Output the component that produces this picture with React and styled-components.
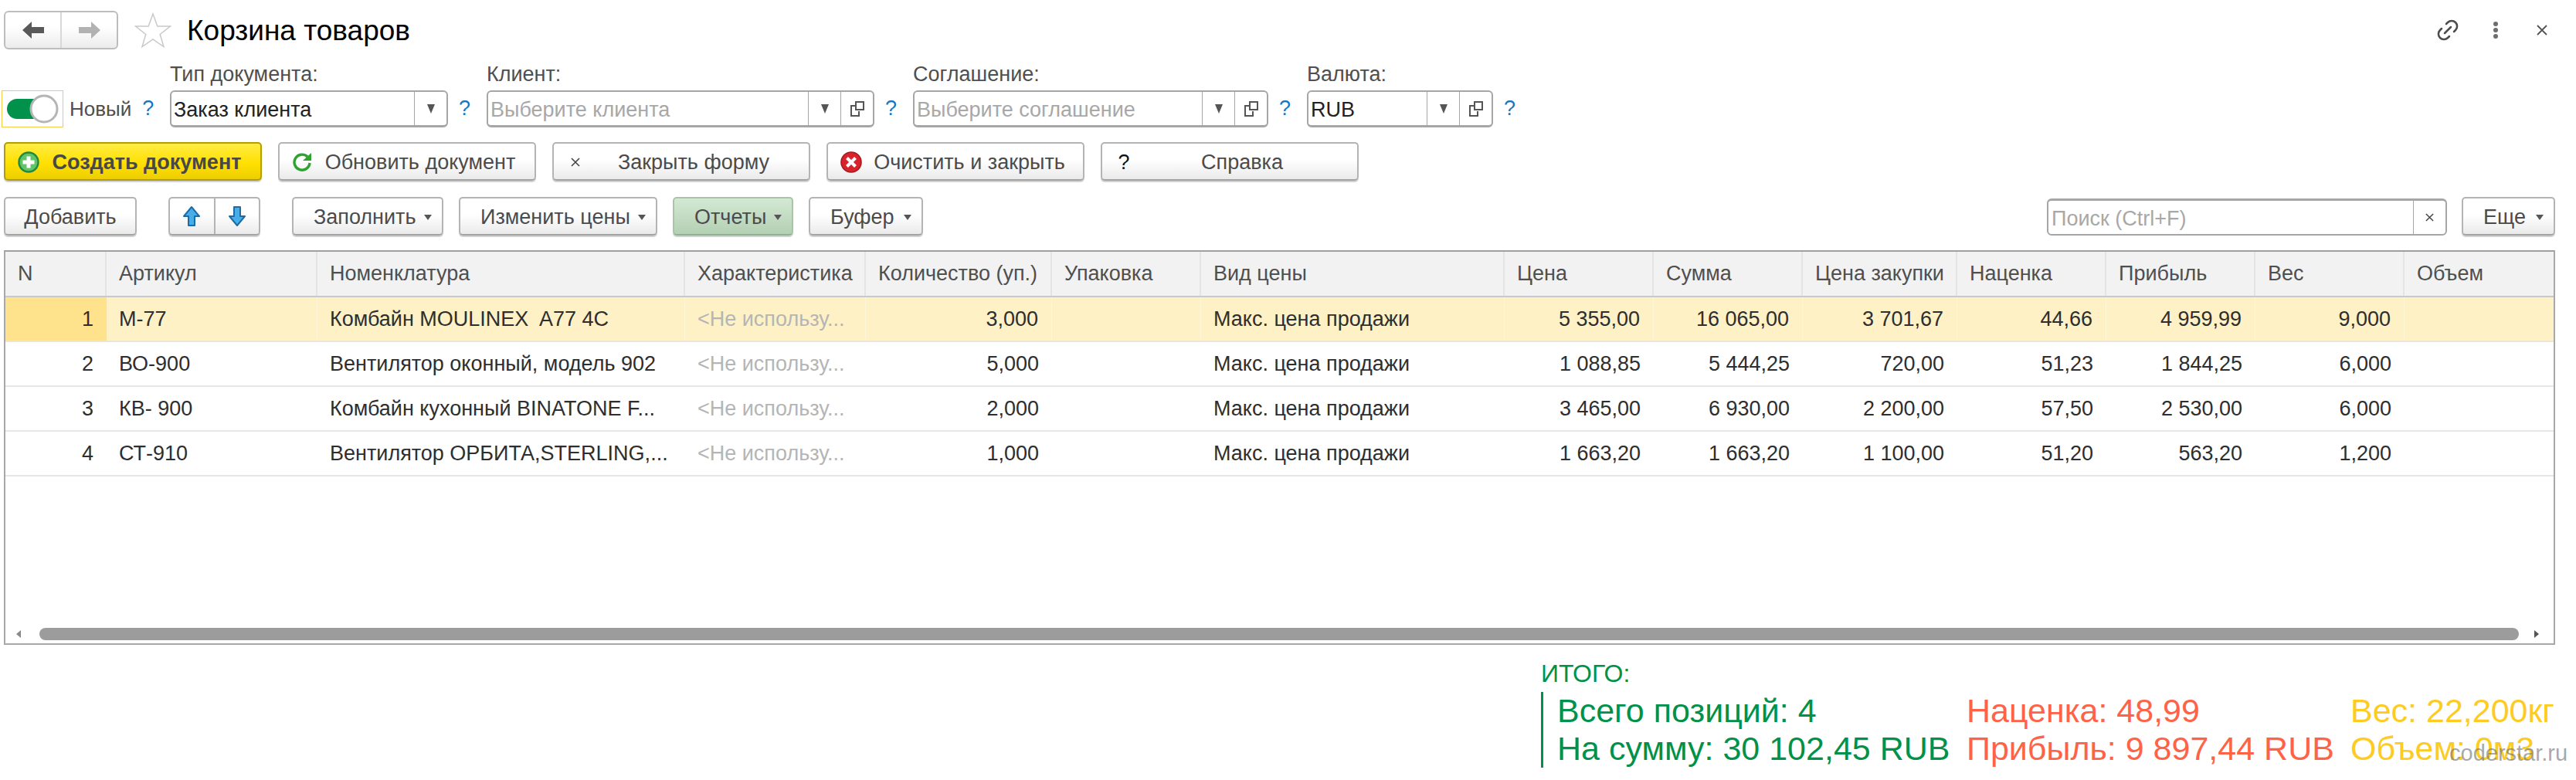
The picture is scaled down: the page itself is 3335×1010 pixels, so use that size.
import React from "react";
import styled, { createGlobalStyle } from "styled-components";

const GlobalStyle = createGlobalStyle`
  html, body {
    margin: 0;
    padding: 0;
    background: #fff;
    overflow: hidden;
  }
  * { box-sizing: border-box; }
`;

const Page = styled.div`
  position: relative;
  width: 3335px;
  height: 1010px;
  padding: 14px 0 0 5px;
  font-family: "Liberation Sans", Arial, sans-serif;
  font-size: 27px;
  color: #4b4b4b;
  background: #fff;
`;

const TitleRow = styled.div`
  display: flex;
  align-items: center;
  height: 50px;
`;

const NavGroup = styled.div`
  display: flex;
  width: 148px;
  height: 50px;
  border: 2px solid #bdbdbd;
  border-radius: 6px;
  background: linear-gradient(#fff 40%, #ececec);
`;

const NavCell = styled.div`
  flex: 1;
  display: flex;
  align-items: center;
  justify-content: center;
  & + & { border-left: 2px solid #d8d8d8; }
`;

const StarIcon = styled.svg`
  margin-left: 21px;
  width: 48px;
  height: 46px;
`;

const Title = styled.h1`
  margin: 0 0 0 20px;
  padding-top: 2px;
  font-size: 37px;
  font-weight: 400;
  color: #000;
  white-space: nowrap;
`;

const WindowTools = styled.div`
  display: flex;
  align-items: center;
  margin-left: auto;
  margin-right: 37px;
`;

const DotsIcon = styled.svg`
  margin-left: 41px;
`;

const CloseIcon = styled.svg`
  margin-left: 49px;
`;

const FieldsRow = styled.div`
  display: flex;
  align-items: flex-end;
  margin-top: 18px;
`;

const ToggleBlock = styled.div`
  display: flex;
  align-items: center;
  width: 218px;
  height: 48px;
  margin-left: -3px;
`;

const ToggleFrame = styled.div`
  display: flex;
  align-items: center;
  justify-content: center;
  width: 80px;
  height: 48px;
  border: 1px solid #f6cb45;
`;

const ToggleText = styled.span`
  margin-left: 8px;
  font-size: 26px;
  color: #4f4f4f;
`;

const Help = styled.span`
  display: block;
  width: ${(p) => p.$width || 50}px;
  padding-left: ${(p) => p.$pad || 14}px;
  height: 48px;
  line-height: 46px;
  font-size: 27px;
  color: #1777bd;
`;

const FieldBlock = styled.div`
  display: flex;
  flex-direction: column;
  width: ${(p) => p.$width}px;
`;

const FieldLabel = styled.label`
  height: 29px;
  line-height: 29px;
  margin-bottom: 6px;
  color: #4f4f4f;
  white-space: nowrap;
`;

const FieldBox = styled.div`
  display: flex;
  align-items: stretch;
  height: 48px;
  border: 2px solid #a6a6a6;
  border-bottom-width: 3px;
  border-radius: 6px;
  background: #fff;
`;

const FieldValue = styled.div`
  flex: 1;
  padding-left: 3px;
  line-height: 46px;
  color: ${(p) => (p.$placeholder ? "#a8a8a8" : "#222")};
  white-space: nowrap;
  overflow: hidden;
`;

const FieldCell = styled.div`
  display: flex;
  align-items: center;
  justify-content: center;
  width: ${(p) => p.$width || 42}px;
  border-left: 1px solid #a6a6a6;
`;

const ButtonRow = styled.div`
  display: flex;
  gap: ${(p) => p.$gap || 21}px;
  margin-top: 19px;
`;

const ToolRow = styled.div`
  display: flex;
  align-items: flex-start;
  margin-top: 21px;
  width: 3303px;
`;

const Button = styled.div`
  display: flex;
  align-items: center;
  justify-content: center;
  width: ${(p) => p.$width}px;
  height: 50px;
  padding-top: 2px;
  border: 2px solid #b4b4b4;
  border-bottom-color: #a2a2a2;
  border-radius: 5px;
  background: linear-gradient(#fff 45%, #eaeaea);
  box-shadow: 0 2px 0 #d2d2d2;
  white-space: nowrap;
  color: #4b4b4b;
`;

const SlotButton = styled(Button)`
  padding: 2px 8px 0 16px;
  justify-content: flex-start;
`;

const PrimaryButton = styled(SlotButton)`
  border-color: #b39d00;
  background: linear-gradient(#ffec45 0%, #ffe000 55%, #ecce00 100%);
  font-weight: 700;
  color: #484848;
`;

const MenuButton = styled(Button)`
  padding: 2px 13px 0 ${(p) => p.$pad || 26}px;
  justify-content: space-between;
  ${(p) =>
    p.$active &&
    `
    background: linear-gradient(#d4e8d4, #b3d0b3);
    border-color: #a9c4a9;
    border-bottom-color: #94ad94;
  `}
`;

const Slot = styled.span`
  display: flex;
  align-items: center;
  justify-content: center;
  flex: 0 0 24px;
  height: 30px;
  svg { flex-shrink: 0; }
`;

const SlotText = styled.span`
  flex: 1;
  text-align: center;
`;

const QuestionMark = styled.span`
  color: #111;
`;

const SplitButton = styled.div`
  display: flex;
  width: 119px;
  height: 50px;
  margin-left: 41px;
  margin-right: 41px;
  border: 2px solid #b4b4b4;
  border-bottom-color: #a2a2a2;
  border-radius: 5px;
  background: linear-gradient(#fff 45%, #eaeaea);
  box-shadow: 0 2px 0 #d2d2d2;
`;

const SplitCell = styled.div`
  flex: 1;
  display: flex;
  align-items: center;
  justify-content: center;
  & + & { border-left: 2px solid #b4b4b4; }
`;

const MenuGroup = styled.div`
  display: flex;
  gap: 20px;
`;

const SearchBox = styled.div`
  display: flex;
  width: 518px;
  height: 48px;
  margin: 2px 19px 0 auto;
  border: 2px solid #a6a6a6;
  border-top-width: 3px;
  border-radius: 6px;
  background: #fff;
`;

const SearchText = styled.div`
  flex: 1;
  padding-left: 4px;
  line-height: 46px;
  color: #a8a8a8;
`;

const Table = styled.div`
  display: flex;
  flex-direction: column;
  width: 3303px;
  height: 511px;
  margin-top: 19px;
  border: 2px solid #a8a8a8;
  border-top-color: #a0a0a0;
`;

const columns = "131px 273px 476px 234px 241px 193px 393px 193px 193px 200px 193px 193px 193px 1fr";

const HeaderRow = styled.div`
  display: grid;
  grid-template-columns: ${columns};
  height: 59px;
  background: #f2f2f2;
  border-bottom: 2px solid #c9c9c9;
`;

const HeaderCell = styled.div`
  padding: 0 16px;
  line-height: 56px;
  color: #4f4f4f;
  white-space: nowrap;
  border-right: 2px solid #e4e4e4;
  &:last-child { border-right: 0; }
`;

const DataRow = styled.div`
  display: grid;
  grid-template-columns: ${columns};
  height: 58px;
  border-bottom: 2px solid #e6e6e6;
  background: ${(p) => (p.$selected ? "#fef1c5" : "#fff")};
`;

const DataCell = styled.div`
  padding: 0 ${(p) => (p.$right ? 17 : 16)}px 0 16px;
  line-height: 56px;
  text-align: ${(p) => (p.$right ? "right" : "left")};
  color: ${(p) => (p.$muted ? "#b5b5b5" : "#2e2e2e")};
  white-space: pre;
  overflow: hidden;
  ${(p) => p.$selected && "border-right: 1px solid #fff6da;"}
  ${(p) => p.$marker && "background: #ffe28c; border-right: 0;"}
`;

const TableFill = styled.div`
  flex: 1;
`;

const ScrollBar = styled.div`
  display: flex;
  align-items: center;
  height: 16px;
  margin-bottom: 4px;
  padding: 0 17px 0 14px;
`;

const ScrollThumb = styled.div`
  width: 3210px;
  height: 16px;
  margin: 0 20px 0 24px;
  border-radius: 8px;
  background: #9c9c9c;
`;

const Totals = styled.div`
  display: flex;
  flex-direction: column;
  margin: 19px 0 0 1990px;
`;

const TotalsTitle = styled.div`
  height: 36px;
  line-height: 36px;
  font-size: 32px;
  color: #00924a;
`;

const TotalsBody = styled.div`
  display: grid;
  grid-template-columns: 530px 497px 1fr;
  grid-auto-rows: 49px;
  margin-top: 6px;
  padding-left: 18px;
  border-left: 3px solid #00924a;
`;

const TotalsCell = styled.div`
  line-height: 49px;
  font-size: 43px;
  white-space: nowrap;
  color: ${(p) => p.$color};
`;

const Watermark = styled.div`
  position: absolute;
  left: 3171px;
  top: 957px;
  font-size: 29px;
  line-height: 36px;
  color: rgba(110, 110, 110, 0.6);
`;

const Arrow = ({ dir, color }) => (
  <svg width="30" height="24" viewBox="0 0 30 24">
    <path
      d="M1 12 L13 1 V8 H29 V16 H13 V23 Z"
      fill={color}
      transform={dir === "right" ? "rotate(180 15 12)" : undefined}
    />
  </svg>
);

const BlueArrow = ({ down }) => (
  <svg width="24" height="28" viewBox="0 0 24 28">
    <path
      d="M12 2 L22 14 H16 V26 H8 V14 H2 Z"
      fill="#48aeea"
      stroke="#1d6ca6"
      strokeWidth="2"
      strokeLinejoin="round"
      transform={down ? "rotate(180 12 14)" : undefined}
    />
  </svg>
);

const Caret = ({ size = 10 }) => (
  <svg width={size} height={size * 0.7} viewBox="0 0 10 7">
    <path d="M0 0 H10 L5 7 Z" fill="#555" />
  </svg>
);

const DropCaret = () => (
  <svg width="10" height="12" viewBox="0 0 10 12">
    <path d="M0 0 H10 L5 12 Z" fill="#555" />
  </svg>
);

const OpenIcon = () => (
  <svg width="18" height="20" viewBox="0 0 18 20" fill="none" stroke="#555" strokeWidth="2">
    <rect x="7" y="1" width="10" height="10" />
    <path d="M7 6 H1 V19 H11 V13" />
  </svg>
);

const SmallCross = ({ size = 12, color = "#444", width = 1.6 }) => (
  <svg width={size} height={size} viewBox="0 0 12 12">
    <path d="M1 1 L11 11 M11 1 L1 11" stroke={color} strokeWidth={width} />
  </svg>
);

const PlusIcon = () => (
  <svg width="28" height="28" viewBox="0 0 28 28">
    <circle cx="14" cy="14" r="12.5" fill="#62c468" stroke="#1e8a3f" strokeWidth="2.4" />
    <path d="M14 6.5 V21.5 M6.5 14 H21.5" stroke="#fff" strokeWidth="5" />
  </svg>
);

const RefreshIcon = () => (
  <svg width="26" height="26" viewBox="0 0 26 26" fill="none">
    <path d="M20 6 A10 10 0 1 0 23 14" stroke="#2ea32e" strokeWidth="3.4" />
    <path d="M14 11 L25 11 L25 1 Z" fill="#2ea32e" />
  </svg>
);

const ClearIcon = () => (
  <svg width="28" height="28" viewBox="0 0 28 28">
    <circle cx="14" cy="14" r="13" fill="#d9232c" stroke="#a51a20" strokeWidth="1.6" />
    <path d="M8.5 8.5 L19.5 19.5 M19.5 8.5 L8.5 19.5" stroke="#fff" strokeWidth="4" />
  </svg>
);

const rows = [
  ["1", "М-77", "Комбайн MOULINEX  A77 4C", "3,000", "5 355,00", "16 065,00", "3 701,67", "44,66", "4 959,99", "9,000"],
  ["2", "ВО-900", "Вентилятор оконный, модель 902", "5,000", "1 088,85", "5 444,25", "720,00", "51,23", "1 844,25", "6,000"],
  ["3", "КВ- 900", "Комбайн кухонный BINATONE F...", "2,000", "3 465,00", "6 930,00", "2 200,00", "57,50", "2 530,00", "6,000"],
  ["4", "СТ-910", "Вентилятор ОРБИТА,STERLING,...", "1,000", "1 663,20", "1 663,20", "1 100,00", "51,20", "563,20", "1,200"],
];

const headers = ["N", "Артикул", "Номенклатура", "Характеристика", "Количество (уп.)", "Упаковка", "Вид цены", "Цена", "Сумма", "Цена закупки", "Наценка", "Прибыль", "Вес", "Объем"];

function App() {
  return (
    <Page>
      <GlobalStyle />

      <TitleRow>
        <NavGroup>
          <NavCell><Arrow dir="left" color="#595959" /></NavCell>
          <NavCell><Arrow dir="right" color="#b2b2b2" /></NavCell>
        </NavGroup>
        <StarIcon viewBox="0 0 48 46">
          <path d="M24 2 L29.8 18 L46.5 18 L33.2 28.5 L38 44.5 L24 35 L10 44.5 L14.8 28.5 L1.5 18 L18.2 18 Z" fill="#fff" stroke="#c9c9c9" strokeWidth="1.5" />
        </StarIcon>
        <Title>Корзина товаров</Title>
        <WindowTools>
          <svg width="34" height="34" viewBox="0 0 24 24" fill="none" stroke="#4d4d4d" strokeWidth="1.8" strokeLinecap="round">
            <g transform="rotate(-45 12 12)">
              <path d="M9 17H7A5 5 0 0 1 7 7h2" />
              <path d="M15 7h2a5 5 0 1 1 0 10h-2" />
              <path d="M8 12h8" />
            </g>
          </svg>
          <DotsIcon width="8" height="24" viewBox="0 0 8 24">
            <circle cx="4" cy="4" r="3" fill="#6e6e6e" />
            <circle cx="4" cy="12" r="3" fill="#6e6e6e" />
            <circle cx="4" cy="20" r="3" fill="#6e6e6e" />
          </DotsIcon>
          <CloseIcon width="14" height="14" viewBox="0 0 14 14">
            <path d="M1 1 L13 13 M13 1 L1 13" stroke="#555" strokeWidth="1.8" />
          </CloseIcon>
        </WindowTools>
      </TitleRow>

      <FieldsRow>
        <ToggleBlock>
          <ToggleFrame>
            <svg width="70" height="40" viewBox="0 0 70 40">
              <rect x="2" y="7" width="46" height="26" rx="13" fill="#00924a" />
              <circle cx="50" cy="20" r="17" fill="#fff" stroke="#b5b5b5" strokeWidth="3" />
            </svg>
          </ToggleFrame>
          <ToggleText>Новый</ToggleText>
          <Help $width={40} $pad={14}>?</Help>
        </ToggleBlock>

        <FieldBlock $width={360}>
          <FieldLabel>Тип документа:</FieldLabel>
          <FieldBox>
            <FieldValue>Заказ клиента</FieldValue>
            <FieldCell><DropCaret /></FieldCell>
          </FieldBox>
        </FieldBlock>
        <Help>?</Help>

        <FieldBlock $width={502}>
          <FieldLabel>Клиент:</FieldLabel>
          <FieldBox>
            <FieldValue $placeholder>Выберите клиента</FieldValue>
            <FieldCell><DropCaret /></FieldCell>
            <FieldCell><OpenIcon /></FieldCell>
          </FieldBox>
        </FieldBlock>
        <Help>?</Help>

        <FieldBlock $width={460}>
          <FieldLabel>Соглашение:</FieldLabel>
          <FieldBox>
            <FieldValue $placeholder>Выберите соглашение</FieldValue>
            <FieldCell><DropCaret /></FieldCell>
            <FieldCell><OpenIcon /></FieldCell>
          </FieldBox>
        </FieldBlock>
        <Help>?</Help>

        <FieldBlock $width={241}>
          <FieldLabel>Валюта:</FieldLabel>
          <FieldBox>
            <FieldValue>RUB</FieldValue>
            <FieldCell><DropCaret /></FieldCell>
            <FieldCell><OpenIcon /></FieldCell>
          </FieldBox>
        </FieldBlock>
        <Help>?</Help>
      </FieldsRow>

      <ButtonRow>
        <PrimaryButton $width={334}>
          <Slot><PlusIcon /></Slot>
          <SlotText>Создать документ</SlotText>
        </PrimaryButton>
        <SlotButton $width={334}>
          <Slot><RefreshIcon /></Slot>
          <SlotText>Обновить документ</SlotText>
        </SlotButton>
        <SlotButton $width={334}>
          <Slot><SmallCross /></Slot>
          <SlotText>Закрыть форму</SlotText>
        </SlotButton>
        <SlotButton $width={334}>
          <Slot><ClearIcon /></Slot>
          <SlotText>Очистить и закрыть</SlotText>
        </SlotButton>
        <SlotButton $width={334}>
          <Slot><QuestionMark>?</QuestionMark></Slot>
          <SlotText>Справка</SlotText>
        </SlotButton>
      </ButtonRow>

      <ToolRow>
        <Button $width={172}>Добавить</Button>
        <SplitButton>
          <SplitCell><BlueArrow /></SplitCell>
          <SplitCell><BlueArrow down /></SplitCell>
        </SplitButton>
        <MenuGroup>
          <MenuButton $width={196}>Заполнить<Caret /></MenuButton>
          <MenuButton $width={257}>Изменить цены<Caret /></MenuButton>
          <MenuButton $width={156} $active>Отчеты<Caret /></MenuButton>
          <MenuButton $width={148}>Буфер<Caret /></MenuButton>
        </MenuGroup>
        <SearchBox>
          <SearchText>Поиск (Ctrl+F)</SearchText>
          <FieldCell><SmallCross size={11} /></FieldCell>
        </SearchBox>
        <MenuButton $width={121} $pad={26}>Еще<Caret /></MenuButton>
      </ToolRow>

      <Table>
        <HeaderRow>
          {headers.map((h) => (
            <HeaderCell key={h}>{h}</HeaderCell>
          ))}
        </HeaderRow>
        {rows.map((r, i) => {
          const selected = i === 0;
          return (
            <DataRow key={r[0]} $selected={selected}>
              <DataCell $right $marker={selected} $selected={selected}>{r[0]}</DataCell>
              <DataCell $selected={selected}>{r[1]}</DataCell>
              <DataCell $selected={selected}>{r[2]}</DataCell>
              <DataCell $muted $selected={selected}>{"<Не использу..."}</DataCell>
              <DataCell $right $selected={selected}>{r[3]}</DataCell>
              <DataCell $selected={selected} />
              <DataCell $selected={selected}>Макс. цена продажи</DataCell>
              <DataCell $right $selected={selected}>{r[4]}</DataCell>
              <DataCell $right $selected={selected}>{r[5]}</DataCell>
              <DataCell $right $selected={selected}>{r[6]}</DataCell>
              <DataCell $right $selected={selected}>{r[7]}</DataCell>
              <DataCell $right $selected={selected}>{r[8]}</DataCell>
              <DataCell $right $selected={selected}>{r[9]}</DataCell>
              <DataCell />
            </DataRow>
          );
        })}
        <TableFill />
        <ScrollBar>
          <svg width="6" height="10" viewBox="0 0 6 10"><path d="M6 0 V10 L0 5 Z" fill="#8a8a8a" /></svg>
          <ScrollThumb />
          <svg width="6" height="10" viewBox="0 0 6 10"><path d="M0 0 V10 L6 5 Z" fill="#555" /></svg>
        </ScrollBar>
      </Table>

      <Totals>
        <TotalsTitle>ИТОГО:</TotalsTitle>
        <TotalsBody>
          <TotalsCell $color="#00924a">Всего позиций: 4</TotalsCell>
          <TotalsCell $color="#ff6347">Наценка: 48,99</TotalsCell>
          <TotalsCell $color="#fdcb22">Вес: 22,200кг</TotalsCell>
          <TotalsCell $color="#00924a">На сумму: 30 102,45 RUB</TotalsCell>
          <TotalsCell $color="#ff6347">Прибыль: 9 897,44 RUB</TotalsCell>
          <TotalsCell $color="#fdcb22">Объем: 0м3</TotalsCell>
        </TotalsBody>
      </Totals>

      <Watermark>coderstar.ru</Watermark>
    </Page>
  );
}

export default App;
